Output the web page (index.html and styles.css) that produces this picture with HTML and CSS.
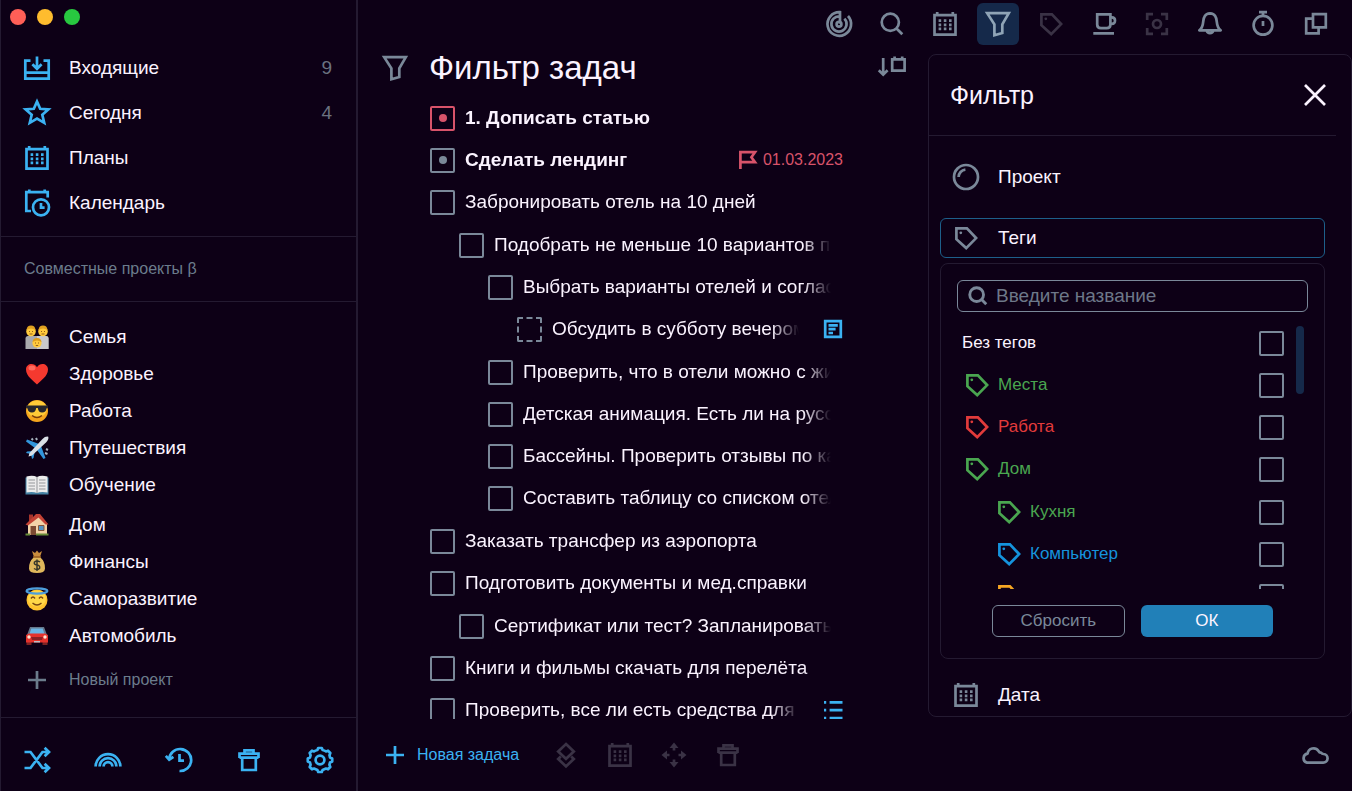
FILE: index.html
```html
<!DOCTYPE html>
<html lang="ru">
<head>
<meta charset="utf-8">
<meta name="viewport" content="width=device-width, initial-scale=1">
<title>Фильтр задач</title>
<link rel="stylesheet" href="styles.css">
</head>
<body>
<svg class="sprite" aria-hidden="true">
  <symbol id="i-inbox" viewBox="0 0 30 30"><path d="M8.5 7.7H3.3V25.7H26.7V7.7H21.5M3.3 19.7H26.7M15 3.5V15.5M10.4 11.2L15 15.8L19.6 11.2"/></symbol>
  <symbol id="i-star" viewBox="0 0 30 30"><path d="M15 3.6L18.2 10.8L26.4 11.4L20.3 16.8L22.2 24.8L15 20.6L7.8 24.8L9.7 16.8L3.6 11.4L11.8 10.8Z"/></symbol>
  <symbol id="i-calendar" viewBox="0 0 30 30"><path d="M4.5 6.2H25.5V25.6H4.5ZM7.2 3V6M22.8 3V6"/><path stroke-dasharray="2.6 2.6" d="M8.6 11.7H21.6M8.6 15.8H21.6M8.6 19.9H21.6"/></symbol>
  <symbol id="i-schedule" viewBox="0 0 30 30"><path d="M9 23H4.3V4.2H25.7V9.5M7.3 1.5V4M22.7 1.5V4M19 15V19.6H22.6"/><circle cx="19" cy="19.3" r="8"/></symbol>
  <symbol id="i-plus" viewBox="0 0 30 30"><path d="M15 6V24M6 15H24"/></symbol>
  <symbol id="i-shuffle" viewBox="0 0 30 30"><path d="M2.5 7H8.5L20.5 23H27M2.5 23H8.5L20.5 7H27M22.6 2.8L27 7L22.6 11.2M22.6 18.8L27 23L22.6 27.2"/></symbol>
  <symbol id="i-rainbow" viewBox="0 0 30 30"><path d="M2.6 21.6A12.4 12.4 0 0 1 27.4 21.6M6.6 21.6A8.4 8.4 0 0 1 23.4 21.6M10.6 21.6A4.4 4.4 0 0 1 19.400 21.6"/></symbol>
  <symbol id="i-history" viewBox="0 0 30 30"><path d="M5.2 14.5A11 11 0 1 1 15.5 26M1.8 10.8L5.2 14.7L9.4 11.8M15.5 9V15.6H20"/></symbol>
  <symbol id="i-trash" viewBox="0 0 30 30"><path d="M5.500 13V8.7H24.5V13M5.5 12.6H24.5M10.5 8.7V5.3H19.500V8.7M8.2 13V25H21.8V13"/></symbol>
  <symbol id="i-gear" viewBox="0 0 30 30"><path stroke-linejoin="round" d="M12.4 5L13.2 3H16.8L17.6 5Q19.5 5.5 21 6.4L23 5.7L25.3 8L24.5 10.2L25 12.4L27.2 13.4V16.6L25 17.6L24.4 19.8L25.3 22L23 24.3L21 23.6L17.6 25L16.8 27H13.2L12.4 25L9 23.6L7 24.3L4.7 22L5.6 19.8L5 17.6L2.8 16.6V13.4L5 12.4L5.6 10.2L4.7 8L7 5.7L9 6.4Q10.5 5.5 12.4 5Z"/><circle cx="15" cy="15" r="4.4"/></symbol>
  <symbol id="i-radar" viewBox="0 0 30 30"><path d="M16 14.5V3.2A11.8 11.8 0 1 0 24 7M16 7.4A7.6 7.6 0 1 0 20.4 9.6"/><circle cx="15" cy="15.2" r="2.4"/></symbol>
  <symbol id="i-search" viewBox="0 0 30 30"><circle cx="13.3" cy="13.3" r="8.6"/><path d="M19.500 19.500L25.3 25.3"/></symbol>
  <symbol id="i-funnel" viewBox="0 0 30 30"><path d="M4.2 4.2H25.8L19.3 15.3V24L11.4 26.2V15.3Z"/></symbol>
  <symbol id="i-tag" viewBox="0 0 30 30"><path d="M5.4 5.4H15.9L25.1 15.1L15.2 25.1L5.4 16.2Z"/><circle class="solid" cx="9.8" cy="9.8" r="1.4"/></symbol>
  <symbol id="i-cup" viewBox="0 0 30 30"><path d="M8.2 5.3H21.4V15.5Q21.4 19.2 17.7 19.2H11.9Q8.2 19.2 8.2 15.5ZM21.4 8.4H22.8Q26 8.4 26 11.6T22.8 14.8H21.4M4.3 24.3H25"/></symbol>
  <symbol id="i-focus" viewBox="0 0 30 30"><path d="M5.2 11V5.2H11M19 5.2H24.8V11M24.8 19V24.8H19M11 24.8H5.2V19"/><circle cx="15" cy="15" r="4"/></symbol>
  <symbol id="i-bell" viewBox="0 0 30 30"><path stroke-linejoin="round" d="M4.3 21.3C10 17.5 6.8 11 9.8 7.2Q11.3 4.6 15 4.4Q18.7 4.6 20.2 7.2C23.2 11 20 17.5 25.7 21.3ZM11.7 21.5A3.4 3.6 0 0 0 18.3 21.5"/></symbol>
  <symbol id="i-timer" viewBox="0 0 30 30"><circle cx="15" cy="16.3" r="9.4"/><path d="M15 7V3.2M11 3.2H19M15 12V17"/></symbol>
  <symbol id="i-copy" viewBox="0 0 30 30"><path d="M12 5.2H24.8V18.4H12ZM12 9.6H5.2V24.4H17.6V18.4"/></symbol>
  <symbol id="i-sort" viewBox="0 0 30 30"><path d="M6.2 5V21M1.8 17.2L6.2 21.6L10.6 17.2M15.2 6.4H27.6V17.6H15.2ZM17.6 3.4V6.600M25.2 3.4V6.600"/></symbol>
  <symbol id="i-flag" viewBox="0 0 20 20"><path d="M2.400 19V2.200H17L13.400 7.200L17 12.200H2.400"/></symbol>
  <symbol id="i-note" viewBox="0 0 20 20"><path d="M2.2 2.2H17.8V17.8H2.2ZM5.5 6.4H14.8M5.5 10.2H12.6M5.5 14H10"/></symbol>
  <symbol id="i-list" viewBox="0 0 20 20"><path d="M1 2.4H3.2M6.6 2.4H19.5M1 10.2H3.2M6.6 10.2H19.5M1 18H3.2M6.6 18H19.5"/></symbol>
  <symbol id="i-layers" viewBox="0 0 30 30"><path d="M15 4L22.8 11.4L15 18.8L7.2 11.4ZM9.8 16.5L7.2 19L15 26.4L22.8 19L20.2 16.5"/></symbol>
  <symbol id="i-move" viewBox="0 0 30 30"><path d="M15 6.500V10.500M15 19.500V23.500M6.500 15H10.500M19.500 15H23.500"/><path class="solid" d="M15 2.500L19.500 8H10.500ZM15 27.500L19.500 22H10.500ZM2.500 15L8 10.500V19.500ZM27.500 15L22 10.500V19.500Z"/></symbol>
  <symbol id="i-close" viewBox="0 0 30 30"><path d="M5 5L25 25M25 5L5 25"/></symbol>
  <symbol id="i-ball" viewBox="0 0 30 30"><circle cx="15" cy="15" r="12"/><path d="M7.6 15A7.6 7.6 0 0 1 14.4 7.6"/></symbol>
  <symbol id="i-cloud" viewBox="0 0 30 30"><path stroke-linejoin="round" d="M7 22.6H23A4.300 4.300 0 0 0 23.500 14Q22 13.800 21 12.500Q19.500 12.800 18.500 11A6 6 0 0 0 7.600 13.600A4.600 4.600 0 0 0 7 22.6Z"/></symbol>
</svg>

<div class="app">
  <aside class="sidebar">
    <div class="window-dots"><span class="dot dot-red"></span><span class="dot dot-yellow"></span><span class="dot dot-green"></span></div>
    <nav class="nav">
      <a class="nav-row" href="#"><svg class="icon"><use href="#i-inbox"/></svg><span>Входящие</span><span class="count">9</span></a>
      <a class="nav-row" href="#"><svg class="icon"><use href="#i-star"/></svg><span>Сегодня</span><span class="count">4</span></a>
      <a class="nav-row" href="#"><svg class="icon"><use href="#i-calendar"/></svg><span>Планы</span></a>
      <a class="nav-row" href="#"><svg class="icon"><use href="#i-schedule"/></svg><span>Календарь</span></a>
    </nav>
    <div class="shared">Совместные проекты β</div>
    <div class="projects">
      <div class="project-group">
        <a class="project" href="#"><svg class="emoji" viewBox="0 0 24 24"><path fill="#a9a9ac" d="M.5 24V13.5Q.5 11 3 11H21Q23.500 11 23.500 13.500V24Z"/><path fill="#c9c9cb" d="M12 11H21Q23.500 11 23.500 13.500V24H12Z"/><circle cx="6" cy="6.500" r="4.800" fill="#ffc93c"/><circle cx="18" cy="6.500" r="4.800" fill="#ffc93c"/><path fill="#e0a020" d="M1.500 5Q2 .6 6 .6T10.500 5Q6 2 1.500 5ZM13.500 5Q14 .6 18 .6T22.500 5Q18 2 13.500 5Z"/><circle cx="12" cy="18" r="4.600" fill="#ffc93c"/><path fill="#dc9c1c" d="M7.500 17Q8 13 12 13T16.500 17Q12 14 7.500 17Z"/><path stroke="#8a5312" stroke-width=".9" fill="none" d="M4 6.500H5M7 6.500H8M16 6.500H17M19 6.500H20M10 18H11M13 18H14M4.500 9H7.500M16.500 9H19.500M10.800 20.500H13.200"/></svg><span>Семья</span></a>
        <a class="project" href="#"><svg class="emoji" viewBox="0 0 24 24"><path fill="#f5392f" d="M12 22.500C9 19 1 14.500 1 7.500C1 1.500 9 .2 12 5.200C15 .2 23 1.500 23 7.500C23 14.500 15 19 12 22.500Z"/><ellipse cx="7" cy="6" rx="3.500" ry="2.500" fill="#ff6b5e"/></svg><span>Здоровье</span></a>
        <a class="project" href="#"><svg class="emoji" viewBox="0 0 24 24"><circle cx="12" cy="12" r="11" fill="#f5a51d"/><ellipse cx="12" cy="10" rx="10" ry="8.500" fill="#ffcb38"/><path fill="#26262c" d="M1 6.500H23V8.500L21.500 9.500Q21 13.500 17 13.500Q13.500 13.500 12.800 9H11.200Q10.500 13.500 7 13.500Q3 13.500 2.500 9.500L1 8.500Z"/><path d="M7 16.500Q12 20.500 17 16.500" fill="none" stroke="#7a3c0a" stroke-width="1.400"/></svg><span>Работа</span></a>
        <a class="project" href="#"><svg class="emoji" viewBox="0 0 24 24"><path fill="#3296dc" d="M14 8L2 3.500L1 5.500L10 12ZM16 10L20.500 22L18.500 23L12 14ZM8 15L2 15.500L1 17L6 18L7 23L8.500 22L9.500 17Z"/><path fill="#d9dfe6" d="M23.300.7Q20.500 0 17.500 3L4.500 17L3.500 20.500L7 19.500L21 6.500Q24 3.500 23.300.7Z"/><path stroke="#a8b4c0" stroke-width="2" d="M6.500 2.500L8 4M11 2L12 4M21 13L23 14M20 17L22.500 18"/></svg><span>Путешествия</span></a>
        <a class="project" href="#"><svg class="emoji" viewBox="0 0 24 24"><path fill="#4583a5" d="M.5 4.500H23.500V21.500H.5Z"/><path fill="#ececec" d="M1.500 3.500Q8 2 12 4V20Q8 18.500 1.500 19.500ZM22.500 3.500Q16 2 12 4V20Q16 18.500 22.500 19.500Z"/><path stroke="#94979a" fill="none" d="M12 4V20M3.500 7H10M3.500 10H10M3.500 13H10M3.500 16H10M14 7H20.500M14 10H20.500M14 13H20.500M14 16H20.500"/></svg><span>Обучение</span></a>
      </div>
      <div class="project-group">
        <a class="project" href="#"><svg class="emoji" viewBox="0 0 24 24"><path fill="#a7352c" d="M4 1.500H8V8H4Z"/><path fill="#f3d3a8" d="M3 11L13 3L22 11V22H3Z"/><path fill="#c34235" d="M.5 11.500L11 1H15L23.500 11.500H20.500L13.500 4.500L3 12.500Z"/><path fill="#7c4a32" d="M5.500 13H11V22H5.500Z"/><path fill="#5695c4" stroke="#85583d" d="M13.500 12.500H19V17.500H13.500Z"/><path fill="#688d39" d="M.5 20.500H5V22.500H.5ZM11 20.500H23.500V22.500H11Z"/></svg><span>Дом</span></a>
        <a class="project" href="#"><svg class="emoji" viewBox="0 0 24 24"><path fill="#c88c3d" d="M7 1L10 3L12 .5L14 3L17 1L15 7H9Z"/><path fill="#dfb75c" d="M9 7H15Q20.500 12 20 18.500Q20 23 12 23T4 18.500Q3.500 12 9 7Z"/><path stroke="#9a6023" stroke-width="1.600" d="M8 7H16"/><path fill="none" stroke="#36362a" stroke-width="1.500" d="M15 12Q12 10 9.500 12Q8.500 14.500 12 15T14.500 18.500Q12 20.500 9 18.500M12 9.500V21"/></svg><span>Финансы</span></a>
        <a class="project" href="#"><svg class="emoji" viewBox="0 0 24 24"><circle cx="12" cy="13" r="10.500" fill="#ffc22e"/><ellipse cx="12" cy="11.500" rx="9" ry="8" fill="#ffd748"/><ellipse cx="12" cy="4" rx="10.400" ry="2.600" fill="none" stroke="#4d9edc" stroke-width="2.200"/><path fill="none" stroke="#7a4611" stroke-width="1.400" d="M6 11.500Q8 8.500 10 11.500M14 11.500Q16 8.500 18 11.500M7.500 16Q12 20 16.500 16"/></svg><span>Саморазвитие</span></a>
        <a class="project" href="#"><svg class="emoji" viewBox="0 0 24 24"><path fill="#7d2324" d="M1.500 16H6.500V21H1.500ZM17.500 16H22.500V21H17.500Z"/><path fill="#67788c" d="M5 3H19L22 11H2Z"/><path fill="#6cb5e4" d="M6.300 4.500H17.700L19.500 10H4.500Z"/><path fill="#e5322c" d="M1 11L4 9.500H20L23 11V18.500H1Z"/><path fill="#8c2023" d="M6 13H18L17 16H7Z"/><circle cx="4" cy="13" r="1.700" fill="#ffe6d4"/><circle cx="20" cy="13" r="1.700" fill="#ffe6d4"/><path fill="#b9bfc6" d="M9 17H15V18.500H9Z"/></svg><span>Автомобиль</span></a>
      </div>
      <button class="new-project" type="button"><svg class="icon"><use href="#i-plus"/></svg>Новый проект</button>
    </div>
    <div class="side-tools">
      <button type="button" aria-label="Перемешать"><svg class="icon"><use href="#i-shuffle"/></svg></button>
      <button type="button" aria-label="Темы"><svg class="icon"><use href="#i-rainbow"/></svg></button>
      <button type="button" aria-label="История"><svg class="icon"><use href="#i-history"/></svg></button>
      <button type="button" aria-label="Корзина"><svg class="icon"><use href="#i-trash"/></svg></button>
      <button type="button" aria-label="Настройки"><svg class="icon"><use href="#i-gear"/></svg></button>
    </div>
  </aside>

  <div class="workspace">
    <header class="toolbar">
      <button type="button" aria-label="Фокус дня"><svg class="icon"><use href="#i-radar"/></svg></button>
      <button type="button" aria-label="Поиск"><svg class="icon"><use href="#i-search"/></svg></button>
      <button type="button" aria-label="Календарь"><svg class="icon"><use href="#i-calendar"/></svg></button>
      <button class="active" type="button" aria-label="Фильтр"><svg class="icon"><use href="#i-funnel"/></svg></button>
      <button class="dim" type="button" aria-label="Теги"><svg class="icon"><use href="#i-tag"/></svg></button>
      <button type="button" aria-label="Перерыв"><svg class="icon"><use href="#i-cup"/></svg></button>
      <button class="dim" type="button" aria-label="Фокус"><svg class="icon"><use href="#i-focus"/></svg></button>
      <button type="button" aria-label="Уведомления"><svg class="icon"><use href="#i-bell"/></svg></button>
      <button type="button" aria-label="Таймер"><svg class="icon"><use href="#i-timer"/></svg></button>
      <button type="button" aria-label="Окна"><svg class="icon"><use href="#i-copy"/></svg></button>
    </header>

    <div class="content">
      <main class="main">
        <div class="heading">
          <svg class="icon"><use href="#i-funnel"/></svg>
          <h1>Фильтр задач</h1>
          <button class="sort" type="button" aria-label="Сортировка"><svg class="icon"><use href="#i-sort"/></svg></button>
        </div>
        <div class="task-view">
          <ul class="tasks">
            <li><div class="task strong urgent"><input class="check dotted" type="checkbox" id="t1"><label for="t1">1. Дописать статью</label></div></li>
            <li><div class="task strong"><input class="check dotted" type="checkbox" id="t2"><label for="t2">Сделать лендинг</label><span class="due"><svg class="mini"><use href="#i-flag"/></svg>01.03.2023</span></div></li>
            <li><div class="task"><input class="check" type="checkbox" id="t3"><label for="t3">Забронировать отель на 10 дней</label></div>
              <ul class="level-1">
                <li><div class="task"><input class="check" type="checkbox" id="t4"><label for="t4">Подобрать не меньше 10 вариантов по</label></div>
                  <ul class="level-2">
                    <li><div class="task"><input class="check" type="checkbox" id="t5"><label for="t5">Выбрать варианты отелей и соглас</label></div>
                      <ul class="level-3">
                        <li><div class="task"><input class="check dashed" type="checkbox" id="t6"><label for="t6">Обсудить в субботу вечером</label><svg class="mini blue"><use href="#i-note"/></svg></div></li>
                      </ul>
                    </li>
                    <li><div class="task"><input class="check" type="checkbox" id="t7"><label for="t7">Проверить, что в отели можно с жи</label></div></li>
                    <li><div class="task"><input class="check" type="checkbox" id="t8"><label for="t8">Детская анимация. Есть ли на русс</label></div></li>
                    <li><div class="task"><input class="check" type="checkbox" id="t9"><label for="t9">Бассейны. Проверить отзывы по ка</label></div></li>
                    <li><div class="task"><input class="check" type="checkbox" id="t10"><label for="t10">Составить таблицу со списком отел</label></div></li>
                  </ul>
                </li>
              </ul>
            </li>
            <li><div class="task"><input class="check" type="checkbox" id="t11"><label for="t11">Заказать трансфер из аэропорта</label></div></li>
            <li><div class="task"><input class="check" type="checkbox" id="t12"><label for="t12">Подготовить документы и мед.справки</label></div>
              <ul class="level-1">
                <li><div class="task"><input class="check" type="checkbox" id="t13"><label for="t13">Сертификат или тест? Запланировать</label></div></li>
              </ul>
            </li>
            <li><div class="task"><input class="check" type="checkbox" id="t14"><label for="t14">Книги и фильмы скачать для перелёта</label></div></li>
            <li><div class="task"><input class="check" type="checkbox" id="t15"><label for="t15">Проверить, все ли есть средства для</label><svg class="mini blue"><use href="#i-list"/></svg></div></li>
          </ul>
        </div>
      </main>

      <section class="panel" aria-label="Фильтр">
        <div class="panel-head">
          <h2>Фильтр</h2>
          <button type="button" aria-label="Закрыть"><svg class="icon"><use href="#i-close"/></svg></button>
        </div>
        <div class="panel-body">
          <button class="facet facet-project" type="button"><svg class="icon"><use href="#i-ball"/></svg>Проект</button>
          <button class="facet facet-open" type="button" aria-expanded="true"><svg class="icon"><use href="#i-tag"/></svg>Теги</button>
          <div class="tag-box">
            <label class="search"><svg class="icon"><use href="#i-search"/></svg><input type="text" placeholder="Введите название" aria-label="Введите название"></label>
            <div class="tag-scroll">
              <ul class="tags">
                <li class="none"><label class="tag" for="g0">Без тегов</label><input class="check" type="checkbox" id="g0"></li>
                <li class="green"><label class="tag" for="g1"><svg class="icon"><use href="#i-tag"/></svg>Места</label><input class="check" type="checkbox" id="g1"></li>
                <li class="red"><label class="tag" for="g2"><svg class="icon"><use href="#i-tag"/></svg>Работа</label><input class="check" type="checkbox" id="g2"></li>
                <li class="green"><label class="tag" for="g3"><svg class="icon"><use href="#i-tag"/></svg>Дом</label><input class="check" type="checkbox" id="g3"></li>
                <li class="green child first-child"><label class="tag" for="g4"><svg class="icon"><use href="#i-tag"/></svg>Кухня</label><input class="check" type="checkbox" id="g4"></li>
                <li class="azure child"><label class="tag" for="g5"><svg class="icon"><use href="#i-tag"/></svg>Компьютер</label><input class="check" type="checkbox" id="g5"></li>
                <li class="amber child"><label class="tag" for="g6" aria-label="Тег"><svg class="icon"><use href="#i-tag"/></svg></label><input class="check" type="checkbox" id="g6"></li>
              </ul>
              <span class="thumb"></span>
            </div>
            <div class="actions">
              <button class="reset" type="button">Сбросить</button>
              <button class="ok" type="button">ОК</button>
            </div>
          </div>
          <button class="facet facet-date" type="button"><svg class="icon"><use href="#i-calendar"/></svg>Дата</button>
        </div>
      </section>
    </div>

    <footer class="bottom">
      <button class="new-task" type="button"><svg class="icon"><use href="#i-plus"/></svg>Новая задача</button>
      <div class="bulk">
        <button type="button" aria-label="Приоритет"><svg class="icon"><use href="#i-layers"/></svg></button>
        <button type="button" aria-label="Дата"><svg class="icon"><use href="#i-calendar"/></svg></button>
        <button type="button" aria-label="Переместить"><svg class="icon"><use href="#i-move"/></svg></button>
        <button type="button" aria-label="Удалить"><svg class="icon"><use href="#i-trash"/></svg></button>
      </div>
      <button class="cloud" type="button" aria-label="Синхронизация"><svg class="icon"><use href="#i-cloud"/></svg></button>
    </footer>
  </div>
</div>
</body>
</html>
```
FILE: styles.css
```css
:root {
  --bg: #0d0016;
  --line: #241a31;
  --grey: #7a8899;
  --dim: #3a3245;
  --blue: #3bb2f2;
  --text: #fbf3ff;
  --red: #d8536a;
}

* { box-sizing: border-box; }

body {
  margin: 0;
  background: var(--bg);
  color: var(--text);
  font: 19px/24px "Liberation Sans", Arial, sans-serif;
}

ul { margin: 0; padding: 0; list-style: none; }
h1, h2 { margin: 0; font-weight: 400; }
a { color: inherit; text-decoration: none; }

button {
  display: flex;
  align-items: center;
  padding: 0;
  border: 0;
  background: none;
  color: inherit;
  font: inherit;
}

.sprite { display: none; }

.icon, .mini {
  flex: none;
  width: 30px;
  height: 30px;
  fill: none;
  stroke: currentColor;
  stroke-width: 2.7px;
}
.mini { width: 20px; height: 20px; }
.solid { fill: currentColor; stroke: none; }

.app { display: flex; height: 100vh; overflow: hidden; }

/* Sidebar */
.sidebar {
  display: flex;
  flex-direction: column;
  flex: 0 0 358px;
  border-right: 2px solid var(--line);
  border-left: 1px solid var(--line);
}
.window-dots { display: flex; gap: 11px; height: 45px; padding: 9px 0 0 9px; }
.dot { width: 16px; height: 16px; border-radius: 50%; }
.dot-red { background: #ff5f57; }
.dot-yellow { background: #febc2e; }
.dot-green { background: #28c840; }

.nav { padding-bottom: 11px; border-bottom: 1px solid var(--line); }
.nav-row {
  display: flex;
  align-items: center;
  gap: 17px;
  height: 45px;
  padding: 0 24px 0 21px;
}
.nav-row .icon { color: var(--blue); }
.count { margin-left: auto; color: #6b7280; }

.shared {
  padding: 20px 23px;
  border-bottom: 1px solid var(--line);
  color: #6b7c8c;
  font-size: 16px;
}

.projects { flex: 1; padding-top: 16px; }
.project-group + .project-group { margin-top: 3px; }
.project { display: flex; align-items: center; gap: 20px; height: 37px; padding-left: 24px; }
.emoji { width: 24px; height: 24px; }
.new-project {
  gap: 17px;
  margin-top: 11px;
  padding-left: 21px;
  color: #6b7c8c;
  font-size: 16px;
}

.side-tools {
  display: flex;
  justify-content: space-between;
  align-items: center;
  height: 74px;
  padding: 10px 21px 0;
  border-top: 1px solid var(--line);
  color: var(--blue);
}

/* Workspace */
.workspace { display: flex; flex-direction: column; flex: 1; min-width: 0; }

.toolbar {
  display: flex;
  justify-content: flex-end;
  gap: 11px;
  padding: 3px 15px;
  color: var(--grey);
}
.toolbar button { justify-content: center; width: 42px; height: 42px; border-radius: 6px; }
.toolbar .active { background: #15294a; color: #8fa4b6; }
.toolbar .dim { color: var(--dim); }

.content { display: flex; flex: 1; min-height: 0; }

.main { display: flex; flex-direction: column; flex: 1; min-width: 0; padding-left: 22px; }
.heading {
  display: flex;
  align-items: center;
  gap: 19px;
  height: 40px;
  margin-bottom: 9px;
  padding-right: 21px;
  color: var(--grey);
}
.heading h1 { color: var(--text); font-size: 33px; line-height: 40px; }
.sort { margin-left: auto; }

.task-view { flex: 1; min-height: 0; overflow: hidden; padding: 0 85px 0 50px; }
.tasks ul { padding-left: 29px; }
.level-1 { margin-top: 1px; }
.level-2, .level-3 { margin-bottom: 1px; }
.task { display: flex; align-items: center; gap: 10px; height: 42px; }
.task label {
  flex: 1;
  min-width: 0;
  margin-right: 12px;
  overflow: hidden;
  white-space: nowrap;
  mask-image: linear-gradient(to right, #000 calc(100% - 28px), transparent);
}
.task .blue { margin-left: 2px; color: var(--blue); }
.strong { font-weight: 700; }
.due {
  display: flex;
  align-items: center;
  gap: 5px;
  color: var(--red);
  font-size: 16px;
  font-weight: 400;
}

.check {
  appearance: none;
  display: grid;
  place-items: center;
  flex: none;
  width: 25px;
  height: 25px;
  margin: 0;
  border: 2px solid var(--grey);
  border-radius: 2px;
}
.dotted::before { content: ""; width: 8px; height: 8px; border-radius: 50%; background: var(--grey); }
.urgent .check { border-color: var(--red); }
.urgent .dotted::before { background: var(--red); }
.dashed { border-style: dashed; }

/* Filter panel */
.panel {
  display: flex;
  flex-direction: column;
  flex: 0 0 424px;
  margin: 6px 0 2px;
  overflow: hidden;
  border: 1px solid var(--line);
  border-radius: 8px;
}
.panel-head {
  display: flex;
  align-items: center;
  justify-content: space-between;
  flex: none;
  height: 81px;
  margin-right: 15px;
  padding: 0 6px 0 21px;
  border-bottom: 1px solid var(--line);
}
.panel-head h2 { font-size: 25px; line-height: 32px; }

.panel-body { display: flex; flex-direction: column; padding: 21px 26px 0 11px; }
.facet { flex: none; gap: 17px; height: 40px; padding: 0 10px; border: 1px solid transparent; border-radius: 6px; }
.facet .icon { color: var(--grey); }
.facet-project { margin-bottom: 21px; }
.facet-open { margin-bottom: 5px; border-color: #1d5f8a; }
.facet-date { margin-top: 16px; }

.tag-box { flex: none; padding: 16px; border: 1px solid var(--line); border-radius: 8px; }
.search {
  display: flex;
  align-items: center;
  gap: 6px;
  height: 32px;
  padding: 0 8px;
  border: 1px solid var(--grey);
  border-radius: 6px;
  color: var(--grey);
}
.search .icon { width: 24px; height: 24px; stroke-width: 3.6px; }
.search input {
  flex: 1;
  min-width: 0;
  padding: 0;
  border: 0;
  outline: 0;
  background: none;
  color: var(--text);
  font: inherit;
}
.search input::placeholder { color: #6d7889; opacity: 1; }

.tag-scroll { display: flex; gap: 12px; height: 267px; margin-top: 10px; overflow: hidden; }
.tags { flex: 1; font-size: 17px; }
.tags li { display: flex; align-items: center; justify-content: space-between; height: 42px; padding-left: 5px; }
.tags .child { padding-left: 37px; }
.tags .first-child { margin-top: 1px; }
.tag { display: flex; align-items: center; gap: 6px; }
.tag .icon { color: inherit; }
.thumb { width: 8px; height: 68px; margin: 4px 4px 0 0; border-radius: 4px; background: #15294a; }
.green { color: #4aa650; }
.red { color: #e23b3b; }
.azure { color: #1593dd; }
.amber { color: #f5a623; }

.actions { display: grid; grid-template-columns: 1fr 1fr; gap: 16px; margin: 16px 35px 5px; font-size: 17px; }
.actions button { justify-content: center; height: 32px; border-radius: 6px; }
.reset { border: 1px solid var(--grey); color: var(--grey); }
.ok { background: #2180b8; color: var(--text); }

/* Bottom bar */
.bottom { display: flex; align-items: center; height: 72px; padding: 0 22px; font-size: 16px; }
.new-task { gap: 7px; color: var(--blue); }
.bulk { display: flex; gap: 24px; margin-left: 32px; color: var(--dim); }
.cloud { margin-left: auto; color: var(--grey); }
```
